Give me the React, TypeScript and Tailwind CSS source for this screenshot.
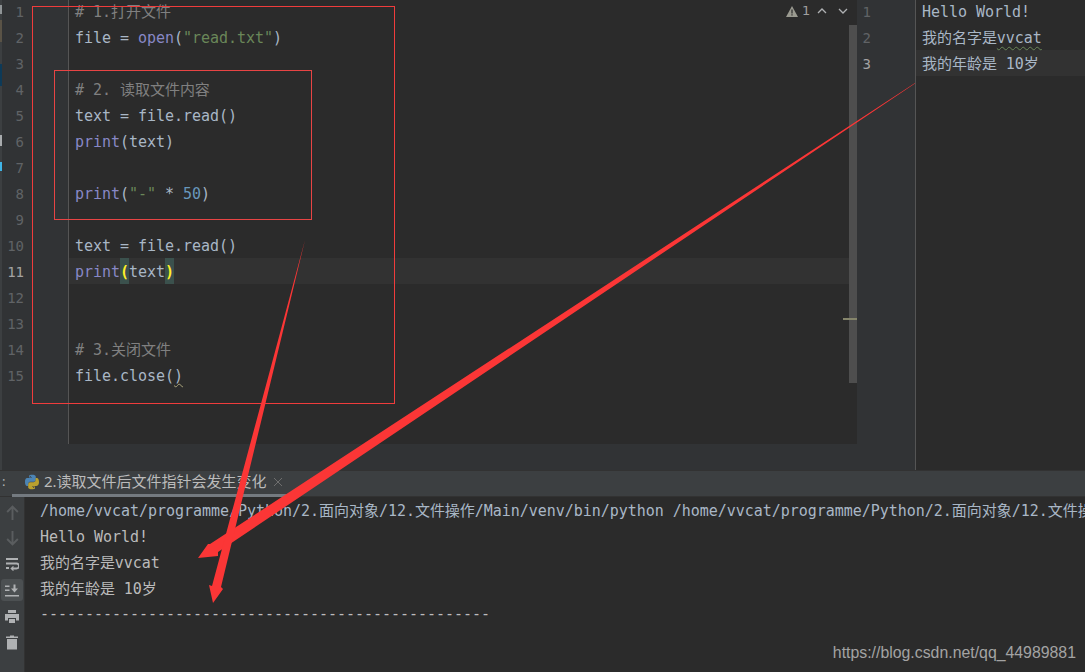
import React from "react";

const mono = "font-['DejaVu_Sans_Mono','Noto_Sans_CJK_SC',monospace] text-[15px] tracking-[-0.03px] whitespace-pre";

const Kw = ({ children }: { children: React.ReactNode }) => <span className="text-[#8888c6]">{children}</span>;
const Str = ({ children }: { children: React.ReactNode }) => <span className="text-[#6a8759]">{children}</span>;
const Com = ({ children }: { children: React.ReactNode }) => <span className="text-[#808080]">{children}</span>;
const Num = ({ children }: { children: React.ReactNode }) => <span className="text-[#6897bb]">{children}</span>;
const Brace = ({ children }: { children: React.ReactNode }) => (
  <span className="inline-block h-[26px] align-top bg-[#3b514d] text-[#ffef28] font-bold">{children}</span>
);

const codeLines: React.ReactNode[] = [
  <Com># 1.打开文件</Com>,
  <>file = <Kw>open</Kw>(<Str>"read.txt"</Str>)</>,
  "",
  <Com># 2. 读取文件内容</Com>,
  "text = file.read()",
  <><Kw>print</Kw>(text)</>,
  "",
  <><Kw>print</Kw>(<Str>"-"</Str> * <Num>50</Num>)</>,
  "",
  "text = file.read()",
  <><Kw>print</Kw><Brace>(</Brace>text<Brace>)</Brace></>,
  "",
  "",
  <Com># 3.关闭文件</Com>,
  <>file.close(<span className="underline decoration-wavy decoration-[#a8a27a] decoration-1 underline-offset-[2px]">)</span></>,
];

function LineNumbers({ count, active, className }: { count: number; active: number; className: string }) {
  return (
    <div className={className}>
      {Array.from({ length: count }, (_, i) => (
        <div
          key={i}
          className={
            "h-[26px] leading-[28px] text-right font-['DejaVu_Sans_Mono',monospace] text-[14px] " +
            (i + 1 === active ? "text-[#a4a3a3]" : "text-[#606366]")
          }
        >
          {i + 1}
        </div>
      ))}
    </div>
  );
}

function PythonIcon() {
  return (
    <svg width="16" height="16" viewBox="0 0 16 16" className="shrink-0 -ml-[1px]">
      <path
        fill="#4c84b4"
        d="M7.9 .8C4.8 .8 5 2.1 5 2.1v1.5h3v.5H3.5S1 3.8 1 7.9s2.2 4 2.2 4h1.2v-1.9s-.1-2.2 2.1-2.2h3.2s2.1 0 2.1-2V2.9S12.2 .8 7.9 .8zM6.3 1.9a.6 .6 0 1 1 0 1.2.6 .6 0 0 1 0-1.2z"
      />
      <path
        fill="#b9a02f"
        d="M8.1 15.2c3.1 0 2.9-1.3 2.9-1.3v-1.5H8v-.5h4.5s2.5 .3 2.5-3.8-2.2-4-2.2-4h-1.2V6s.1 2.2-2.1 2.2H6.3s-2.1 0-2.1 2v3s-.4 2 3.9 2zm1.6-1.1a.6 .6 0 1 1 0-1.2.6 .6 0 0 1 0 1.2z"
      />
    </svg>
  );
}

function ToolButton({ children, active, dim }: { children: React.ReactNode; active?: boolean; dim?: boolean }) {
  return (
    <div
      className={
        "w-[22px] h-[22px] flex items-center justify-center rounded-[3px] mb-[4px] " +
        (active ? "bg-[#4c5052] " : "") +
        (dim ? "text-[#5a5d5f]" : "text-[#afb1b3]")
      }
    >
      {children}
    </div>
  );
}

export default function App() {
  return (
    <div className="relative w-[1085px] h-[672px] overflow-hidden flex flex-col bg-[#2b2b2b]">
      {/* editors */}
      <div className="flex h-[470px] shrink-0">
        {/* clipped project panel on the far left */}
        <div className="w-[2px] shrink-0 bg-[#3c3f41] flex flex-col">
          <div className="h-[5px]" />
          <div className="h-[9px] bg-[#8f9496]" />
          <div className="h-[6px]" />
          <div className="h-[22px] bg-[#5a5346]" />
          <div className="h-[22px]" />
          <div className="h-[22px] bg-[#0d3a58]" />
          <div className="h-[49px]" />
          <div className="h-[11px] bg-[#a8abad]" />
          <div className="h-[16px]" />
          <div className="h-[9px] bg-[#3fb4e6]" />
        </div>

        <div className="w-[855px] shrink-0 flex flex-col bg-[#313335]">
          <div className="relative flex h-[444px] overflow-hidden">
            <LineNumbers count={15} active={11} className="w-[66px] shrink-0 -mt-[2px] pr-[44px]" />
            <div className="w-px shrink-0 bg-[#555555]" />
            <div className="relative flex-1 bg-[#2b2b2b] overflow-hidden">
              <div className={mono + " leading-[28px] -mt-[2px] text-[#a9b7c6]"}>
                {codeLines.map((line, i) => (
                  <div key={i} className={"h-[26px] pl-[6px] " + (i === 10 ? "bg-[#323232]" : "")}>
                    {line}
                  </div>
                ))}
              </div>

              {/* inspection widget */}
              <div className="absolute top-[3px] right-[3px] flex items-center text-[#a0a0a0]">
                <svg width="12" height="11" viewBox="0 0 12 11" className="mr-[4px]">
                  <path fill="#9a9a90" d="M6 0l6 11H0z" />
                  <path fill="#2b2b2b" d="M5.4 3.5h1.2v4H5.4zM5.4 8.3h1.2v1.2H5.4z" />
                </svg>
                <span className="font-['DejaVu_Sans',sans-serif] text-[13px] leading-4 w-[12px]">1</span>
                <svg width="12" height="8" viewBox="0 0 12 8" fill="none" stroke="#afb1b3" strokeWidth="1.3" className="ml-[2px]">
                  <path d="M2 6l4-4 4 4" />
                </svg>
                <svg width="12" height="8" viewBox="0 0 12 8" fill="none" stroke="#afb1b3" strokeWidth="1.3" className="ml-[9px] mr-[5px]">
                  <path d="M2 2l4 4 4-4" />
                </svg>
              </div>

              {/* scrollbar and error stripe */}
              <div className="absolute top-[25px] right-0 w-[8px] h-[358px] bg-[#4e4e4e]" />
              <div className="absolute top-[318px] right-0 w-[14px] h-[2px] bg-[#85856b]" />
            </div>
          </div>
          <div className="h-[26px]" />
        </div>

        <LineNumbers count={3} active={3} className="w-[58px] shrink-0 bg-[#313335] -mt-[2px] pr-[44px] pb-[2px]" />
        <div className="w-px shrink-0 bg-[#555555]" />
        <div className={mono + " leading-[28px] flex-1 -mt-[2px] text-[#a9b7c6] overflow-hidden"}>
          <div className="h-[26px] pl-[6px]">Hello World!</div>
          <div className="h-[26px] pl-[6px]">
            我的名字是
            <span className="underline decoration-wavy decoration-[#6a8759] decoration-1 underline-offset-[3px]">vvcat</span>
          </div>
          <div className="h-[26px] pl-[6px] bg-[#323232]">我的年龄是 10岁</div>
        </div>
      </div>

      {/* run tool window header */}
      <div className="relative flex h-[27px] shrink-0 items-center bg-[#3c3f41] border-t border-b border-[#323232] pl-[2px] pb-[4px]">
        <span className="text-[#afb1b3] text-[13px] font-['Noto_Sans',sans-serif] w-[23px]">:</span>
        <PythonIcon />
        <span className="ml-[4px] font-['Noto_Sans','Noto_Sans_CJK_SC',sans-serif] text-[15px] text-[#bbbbbb] whitespace-nowrap">
          2.读取文件后文件指针会发生变化
        </span>
        <svg width="10" height="10" viewBox="0 0 10 10" stroke="#6e6e6e" strokeWidth="1" className="ml-[6px]">
          <path d="M1 1l8 8M9 1l-8 8" />
        </svg>
        <div className="absolute left-[12px] bottom-[-1px] w-[278px] h-[3px] bg-[#747a80]" />
      </div>

      {/* console */}
      <div className="flex flex-1 min-h-0">
        <div className="w-[25px] shrink-0 bg-[#3c3f41] border-r border-[#323232] pt-[4px] pl-[1px]">
          <ToolButton dim>
            <svg width="13" height="15" viewBox="0 0 12 14" fill="none" stroke="currentColor" strokeWidth="1.8">
              <path d="M6 14V2M1 6.5L6 1.5l5 5" />
            </svg>
          </ToolButton>
          <ToolButton dim>
            <svg width="13" height="15" viewBox="0 0 12 14" fill="none" stroke="currentColor" strokeWidth="1.8">
              <path d="M6 0v12M1 7.5l5 5 5-5" />
            </svg>
          </ToolButton>
          <ToolButton>
            <svg width="14" height="15" viewBox="0 0 14 14" fill="none" stroke="currentColor" strokeWidth="1.8">
              <path d="M1 1.5h12M1 6h10.5a2.2 2.2 0 0 1 0 5H7M1 10.5h3" />
              <path d="M8.5 9l-2.2 2 2.2 2" strokeWidth="1.3" />
            </svg>
          </ToolButton>
          <ToolButton active>
            <svg width="14" height="15" viewBox="0 0 14 14" fill="currentColor">
              <path d="M0 2h4.5v1.5H0zM0 6h4.5v1.5H0zM0 11.5h14V13H0zM8.5 1h2v4H13l-3.5 4L6 5h2.5z" />
            </svg>
          </ToolButton>
          <ToolButton>
            <svg width="14" height="15" viewBox="0 0 14 14" fill="currentColor">
              <path d="M3 .5h8v3H3zM0 4.5h14V11h-3V8.5H3V11H0zM4 9.5h6v4H4z" />
            </svg>
          </ToolButton>
          <ToolButton>
            <svg width="12" height="15" viewBox="0 0 12 14" fill="currentColor">
              <path d="M4 0h4v1h4v1.5H0V1h4zM1 3.5h10V14H1z" />
            </svg>
          </ToolButton>
        </div>
        <div className={mono + " leading-[26px] flex-1 min-w-0 overflow-hidden pl-[15px] pt-[1px] text-[#a9b7c6]"}>
          <div className="h-[26px]">/home/vvcat/programme/Python/2.面向对象/12.文件操作/Main/venv/bin/python /home/vvcat/programme/Python/2.面向对象/12.文件操作</div>
          <div className="text-[#bbbbbb]">
            <div className="h-[26px]">Hello World!</div>
            <div className="h-[26px]">我的名字是vvcat</div>
            <div className="h-[26px]">我的年龄是 10岁</div>
            <div className="h-[26px] -mt-[1px]">{"-".repeat(50)}</div>
          </div>
        </div>
      </div>

      {/* hand drawn annotations on top of the screenshot */}
      <div className="absolute left-[32px] top-[6px] w-[363px] h-[398px] border border-[#f03c3c]" />
      <div className="absolute left-[54px] top-[70px] w-[258px] h-[150px] border border-[#e84444]" />
      <svg className="absolute inset-0" width="1085" height="672" viewBox="0 0 1085 672">
        <polygon fill="#fb3636" points="915,83 915,83.4 218,552 218,556 198,558 208,544 210,544" />
        <polygon fill="#fb3636" points="305,240 221,587 223,589 213,603 209,585 212,586" />
      </svg>

      <div className="absolute right-[9px] bottom-[9px] font-['Liberation_Sans',sans-serif] text-[15.85px] leading-5 text-[#a3a3a3] whitespace-nowrap">
        https://blog.csdn.net/qq_44989881
      </div>
    </div>
  );
}
